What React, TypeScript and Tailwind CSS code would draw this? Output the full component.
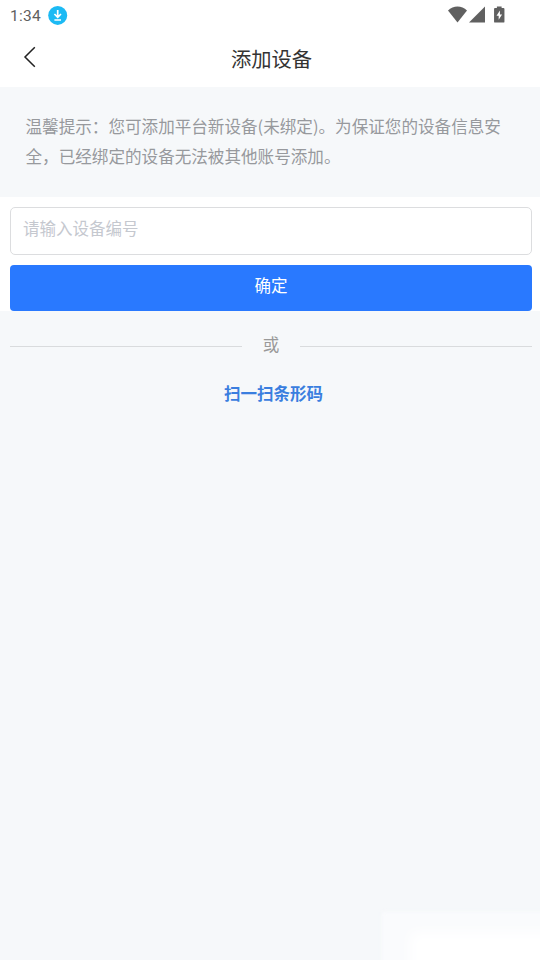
import { useState } from 'react'

function StatusBar() {
  return (
    <div className="flex h-[30px] items-center justify-between pr-[35.5px] pl-2.5 text-[#606060]">
      <div className="flex items-center gap-1.5">
        <span className="w-8 pt-0.5 font-['Roboto',sans-serif] text-[15.5px] leading-5 tracking-[0.3px] whitespace-nowrap">
          1:34
        </span>
        <svg width="20" height="20" viewBox="0 0 20 20" fill="none">
          <circle cx="9.7" cy="10.4" r="9.5" fill="#1cbaf4" />
          <path d="M9.7 5v7M6.4 9l3.3 3.3L13 9M6.4 15H13" stroke="#fff" strokeWidth="1.7" />
        </svg>
      </div>
      <div className="flex items-center pb-px">
        <svg width="19" height="17" viewBox="0 0 19 17" fill="currentColor">
          <path d="M0 4.4C5.3-.8 13.7-.8 19 4.4L9.5 16.5z" />
        </svg>
        <svg className="ml-0.5" width="16" height="17" viewBox="0 0 16 17" fill="currentColor">
          <path d="M16 .5v16H0z" />
        </svg>
        <svg className="ml-[9px]" width="10.5" height="17" viewBox="0 0 11 18">
          <path
            d="M3 .4h5v1.7h2q1 0 1 1v13.5q0 1-1 1H1q-1 0-1-1V3.1q0-1 1-1h2z"
            fill="currentColor"
          />
          <path d="M6.2 4.7 2.6 10.2h2.3v4.3l3.6-5.6H6.2z" fill="#fff" />
        </svg>
      </div>
    </div>
  )
}

function Header() {
  return (
    <header className="grid h-[57px] grid-cols-[56px_1fr_56px] items-center pb-[3px] pl-[3px]">
      <button type="button" aria-label="返回" className="flex h-full items-center pl-[19.5px]">
        <svg width="13" height="22" viewBox="0 0 13 22" fill="none">
          <path d="M11.8 1.3 2 11l9.8 9.7" stroke="#222" strokeWidth="1.5" />
        </svg>
      </button>
      <h1 className="pt-0.5 text-center text-[20.3px] leading-7 text-[#333]">添加设备</h1>
    </header>
  )
}

export default function App() {
  const [code, setCode] = useState('')

  return (
    <div className="relative h-[960px] w-[540px] overflow-hidden bg-[#f6f8fa] font-['Noto_Sans_CJK_SC',sans-serif] text-[16.55px]">
      <div className="bg-white">
        <StatusBar />
        <Header />
      </div>

      <p className="h-[110px] pt-6 pr-6 pl-[25.5px] text-[16.58px] leading-[30px] text-[#97999d]">
        温馨提示：您可添加平台新设备(未绑定)。为保证您的设备信息安全，已经绑定的设备无法被其他账号添加。
      </p>

      <form
        className="flex h-[114px] flex-col gap-2.5 bg-white pt-2.5 pr-2 pl-2.5"
        onSubmit={(e) => e.preventDefault()}
      >
        <input
          className="h-12 w-full shrink-0 rounded-[5px] border border-[#dcdddf] bg-white px-3 pb-1.5 text-[16.5px] text-[#333] outline-none placeholder:text-[#c5c8cf]"
          placeholder="请输入设备编号"
          value={code}
          onChange={(e) => setCode(e.target.value)}
        />
        <button
          type="submit"
          className="h-[46px] shrink-0 rounded-[4px] bg-[#2979ff] pb-1.5 text-white"
        >
          确定
        </button>
      </form>

      <div className="flex h-[70px] items-center pr-2 pl-2.5">
        <div className="h-px flex-1 bg-[#d9dbdd]" />
        <span className="w-[58px] pb-1 text-center text-[#999]">或</span>
        <div className="h-px flex-1 bg-[#d9dbdd]" />
      </div>

      <div className="flex justify-center pl-[7px]">
        <button type="button" className="leading-6 font-bold text-[#3a7edf]">
          扫一扫条形码
        </button>
      </div>

      {/* soft highlight in the bottom corner */}
      <div className="absolute right-0 bottom-0 h-[52px] w-[162px] overflow-hidden">
        <div className="absolute top-1 left-1 h-20 w-60 bg-[#fafbfd] blur-[2px]" />
        <div className="absolute top-6 left-8 h-20 w-52 bg-white blur-[7px]" />
      </div>
    </div>
  )
}
